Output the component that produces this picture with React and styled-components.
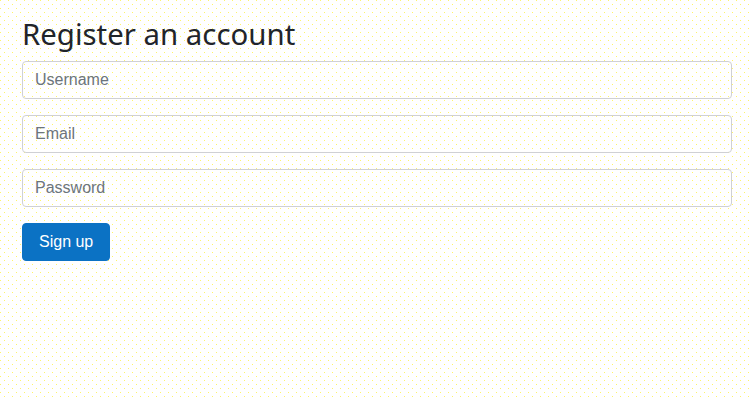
import React from "react"
import styled, { createGlobalStyle } from "styled-components"

const GlobalStyle = createGlobalStyle`
  html, body {
    margin: 0;
    height: 100%;
  }
  body {
    background-color: #ffffff;
    background-image:
      conic-gradient(from 0deg at 1px 1px, transparent 75%, #fff36a 0),
      conic-gradient(from 0deg at 1px 1px, transparent 75%, #fff36a 0);
    background-size: 8px 8px, 8px 8px;
    background-position: 0 0, 4px 4px;
    font-family: "Liberation Sans", Arial, sans-serif;
    color: #212529;
  }
`

const Page = styled.main`
  padding: 14px 18px 0 22px;
`

const Title = styled.h1`
  margin: 0 0 6px;
  font-family: "Noto Sans", "Open Sans", sans-serif;
  font-weight: 400;
  font-size: 29.4px;
  line-height: 41px;
  color: #1f252b;
`

const Form = styled.form`
  display: flex;
  flex-direction: column;
  gap: 16px;
`

const Field = styled.input`
  box-sizing: border-box;
  width: 100%;
  height: 38px;
  padding: 6px 12px;
  font-family: "Liberation Sans", Arial, sans-serif;
  font-size: 16px;
  color: #495057;
  background: transparent;
  border: 1px solid #cfd0d4;
  border-radius: 4px;
  outline: none;

  &::placeholder {
    color: #6c757d;
  }
`

const Button = styled.button`
  align-self: flex-start;
  box-sizing: border-box;
  height: 38px;
  padding: 0 16px;
  font-family: "Liberation Sans", Arial, sans-serif;
  font-size: 16px;
  color: #ffffff;
  background: #0b72c4;
  border: 1px solid #0b72c4;
  border-radius: 4px;
  cursor: pointer;
`

export default function App() {
  return (
    <>
      <GlobalStyle />
      <Page>
        <Title>Register an account</Title>
        <Form onSubmit={e => e.preventDefault()}>
          <Field type="text" placeholder="Username" />
          <Field type="email" placeholder="Email" />
          <Field type="password" placeholder="Password" />
          <Button type="submit">Sign up</Button>
        </Form>
      </Page>
    </>
  )
}
